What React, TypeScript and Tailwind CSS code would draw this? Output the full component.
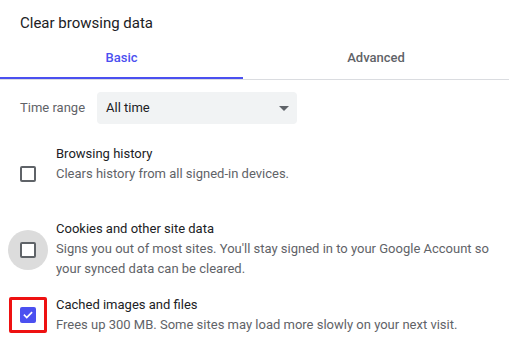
import { useState } from 'react';

const font = { fontFamily: 'Roboto, "Liberation Sans", sans-serif' };

function Checkbox({ checked }: { checked?: boolean }) {
  if (checked) {
    return (
      <div className="w-4 h-4 rounded-[2px] bg-[#4b50f0] flex items-center justify-center">
        <svg width="12" height="12" viewBox="0 0 24 24" fill="none" stroke="white" strokeWidth={3.4} strokeLinecap="square">
          <path d="M5 12.5l4.5 4.5L19 7.5" />
        </svg>
      </div>
    );
  }
  return <div className="w-4 h-4 rounded-[2px] border-2 border-[#5f6368] bg-white" />;
}

export default function App() {
  const [tab, setTab] = useState('basic');

  return (
    <div className="w-[513px] h-[355px] bg-white overflow-hidden text-[#202124]" style={font}>
      {/* Title */}
      <div className="h-[38px] pl-5 pt-[13px] text-[15px] leading-[20px]">Clear browsing data</div>

      {/* Tabs */}
      <div className="w-[509px] flex border-b border-[#dadce0]">
        <button
          onClick={() => setTab('basic')}
          className={`w-[243px] h-[41px] flex items-center justify-center text-[13px] font-medium border-b-2 ${
            tab === 'basic' ? 'text-[#4b50f0] border-[#4b50f0]' : 'text-[#5f6368] border-transparent'
          }`}
        >
          Basic
        </button>
        <button
          onClick={() => setTab('advanced')}
          className={`flex-1 h-[41px] flex items-center justify-center text-[13px] font-medium border-b-2 ${
            tab === 'advanced' ? 'text-[#4b50f0] border-[#4b50f0]' : 'text-[#5f6368] border-transparent'
          }`}
        >
          Advanced
        </button>
      </div>

      {/* Time range */}
      <div className="mt-3 flex items-center pl-5">
        <span className="w-[77px] text-[13px] text-[#5f6368]">Time range</span>
        <div className="w-[200px] h-8 rounded-[4px] bg-[#f1f3f4] flex items-center justify-between pl-[9px] pr-2 text-[13px]">
          <span>All time</span>
          <svg width="10" height="5" viewBox="0 0 10 5">
            <path d="M0 0h10L5 5z" fill="#5f6368" />
          </svg>
        </div>
      </div>

      {/* Browsing history */}
      <div className="mt-5 flex text-[13px] leading-[20px]">
        <div className="w-14 pl-5 pt-[22px] shrink-0">
          <Checkbox />
        </div>
        <div>
          <div>Browsing history</div>
          <div className="text-[#5f6368]">Clears history from all signed-in devices.</div>
        </div>
      </div>

      {/* Cookies */}
      <div className="mt-[35px] flex text-[13px] leading-[20px]">
        <div className="w-14 pl-5 pt-[23px] shrink-0">
          <div className="relative w-4 h-4">
            <div className="absolute -left-3 -top-3 w-10 h-10 rounded-full bg-[#dcdcdc]" />
            <div className="relative">
              <Checkbox />
            </div>
          </div>
        </div>
        <div className="w-[445px]">
          <div>Cookies and other site data</div>
          <div className="text-[#5f6368]">
            Signs you out of most sites. You'll stay signed in to your Google Account so your synced data can be cleared.
          </div>
        </div>
      </div>

      {/* Cached */}
      <div className="mt-4 flex text-[13px] leading-[20px]">
        <div className="w-14 pl-5 pt-3 shrink-0">
          <div className="relative w-4 h-4">
            <div className="absolute left-[-11px] top-[-10px] w-[38px] h-9 border-[3px] border-[#ee1111] rounded-[2px]" />
            <Checkbox checked />
          </div>
        </div>
        <div>
          <div>Cached images and files</div>
          <div className="text-[#5f6368]">Frees up 300 MB. Some sites may load more slowly on your next visit.</div>
        </div>
      </div>
    </div>
  );
}
